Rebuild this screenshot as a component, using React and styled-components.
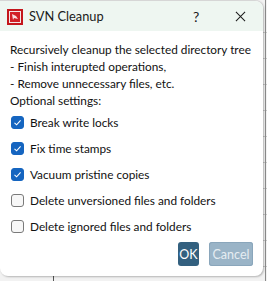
import React from "react";
import styled, { createGlobalStyle } from "styled-components";

const GlobalStyle = createGlobalStyle`
  html, body {
    margin: 0;
    padding: 0;
  }
  body {
    width: 267px;
    height: 281px;
    overflow: hidden;
    background-color: #f2f2f2;
    background-image:
      linear-gradient(90deg, transparent 53px, #555 53px, #555 54px, transparent 54px),
      linear-gradient(90deg, transparent 265px, #8a8a8a 265px, #8a8a8a 266px, transparent 266px),
      repeating-linear-gradient(180deg, transparent 0, transparent 25px, #c8c8c8 25px, #c8c8c8 26px);
    background-position: 0 0, 0 0, 0 7px;
    font-family: Lato, "Noto Sans", sans-serif;
  }
`;

const options = [
  { label: "Break write locks", checked: true },
  { label: "Fix time stamps", checked: true },
  { label: "Vacuum pristine copies", checked: true },
  { label: "Delete unversioned files and folders", checked: false },
  { label: "Delete ignored files and folders", checked: false },
];

const App = () => {
  return (
    <>
      <GlobalStyle />
      <Dialog>
        <TitleBar>
          <AppIcon viewBox="0 0 16 16">
            <rect x="0" y="0" width="16" height="16" fill="#c4161c" />
            <rect x="2" y="2" width="12" height="12" fill="#f4e6e6" />
            <rect x="3" y="3" width="10" height="10" fill="#d21f26" />
            <path d="M5 5 L9 7 L11 10 L7 9 L6 11 Z" fill="#fff" opacity="0.85" />
          </AppIcon>
          <Title>SVN Cleanup</Title>
          <Help>?</Help>
          <Close viewBox="0 0 12 12">
            <path d="M1 1 L11 11 M11 1 L1 11" stroke="#1b1b1b" strokeWidth="1.1" />
          </Close>
        </TitleBar>
        <Body>
          <Info>
            <Line>Recursively cleanup the selected directory tree</Line>
            <Line>- Finish interupted operations,</Line>
            <Line>- Remove unnecessary files, etc.</Line>
            <Line>Optional settings:</Line>
          </Info>
          <Options>
            {options.map((o) => (
              <Option key={o.label}>
                <Box checked={o.checked}>
                  {o.checked && (
                    <svg width="9" height="9" viewBox="0 0 9 9">
                      <path d="M1.5 4.8 L3.6 6.8 L7.6 2.3" stroke="#fff" strokeWidth="1.1" fill="none" />
                    </svg>
                  )}
                </Box>
                <OptionText>{o.label}</OptionText>
              </Option>
            ))}
          </Options>
          <Buttons>
            <Button primary width="21px">OK</Button>
            <Button disabled width="44px">Cancel</Button>
          </Buttons>
        </Body>
      </Dialog>
    </>
  );
};

const Dialog = styled.div`
  width: 263px;
  height: 276px;
  background: #ffffff;
  border-radius: 0 8px 8px 8px;
  border-top: 1px solid #d6d6d6;
  box-sizing: border-box;
  box-shadow: 1px 1px 2px rgba(0, 0, 0, 0.25);
  overflow: hidden;
  display: flex;
  flex-direction: column;
`;

const TitleBar = styled.div`
  height: 30px;
  background: #eef6f1;
  display: flex;
  align-items: center;
  padding-left: 7px;
`;

const AppIcon = styled.svg`
  width: 16px;
  height: 16px;
  margin-top: 2px;
`;

const Title = styled.span`
  margin-left: 6px;
  font-size: 12.8px;
  color: #1a1a1a;
  flex: 1;
`;

const Help = styled.span`
  font-size: 14px;
  color: #1a1a1a;
  width: 8px;
  margin-right: 34px;
`;

const Close = styled.svg`
  width: 11px;
  height: 11px;
  margin-right: 17px;
`;

const Body = styled.div`
  flex: 1;
  padding: 10px 10px 0 10px;
  display: flex;
  flex-direction: column;
`;

const Info = styled.div`
  display: flex;
  flex-direction: column;
`;

const Line = styled.div`
  font-size: 11.8px;
  line-height: 17px;
  color: #111;
  white-space: nowrap;
`;

const Options = styled.div`
  display: flex;
  flex-direction: column;
  gap: 13px;
  margin-top: 7px;
  padding-left: 1px;
`;

const Option = styled.div`
  display: flex;
  align-items: center;
  height: 13px;
`;

const Box = styled.span`
  width: 13px;
  height: 13px;
  box-sizing: border-box;
  border-radius: 3px;
  display: flex;
  align-items: center;
  justify-content: center;
  background: ${(p) => (p.checked ? "#1565c0" : "#f7f7f7")};
  border: 1px solid ${(p) => (p.checked ? "#1565c0" : "#7a7a7a")};
`;

const OptionText = styled.span`
  margin-left: 6px;
  font-size: 11.8px;
  color: #111;
  white-space: nowrap;
`;

const Buttons = styled.div`
  display: flex;
  justify-content: flex-end;
  gap: 10px;
  margin-top: auto;
  margin-bottom: 10px;
`;

const Button = styled.button`
  width: ${(p) => p.width};
  height: 24px;
  padding: 0;
  border: none;
  border-radius: 3px;
  font-family: Lato, "Noto Sans", sans-serif;
  font-size: 12.5px;
  background: ${(p) => (p.primary ? "#33607f" : "#9ab4c7")};
  color: ${(p) => (p.primary ? "#ffffff" : "#e6edf2")};
  box-shadow: ${(p) => (p.primary ? "none" : "inset 0 0 0 1px #8aa6bb")};
`;

export default App;
